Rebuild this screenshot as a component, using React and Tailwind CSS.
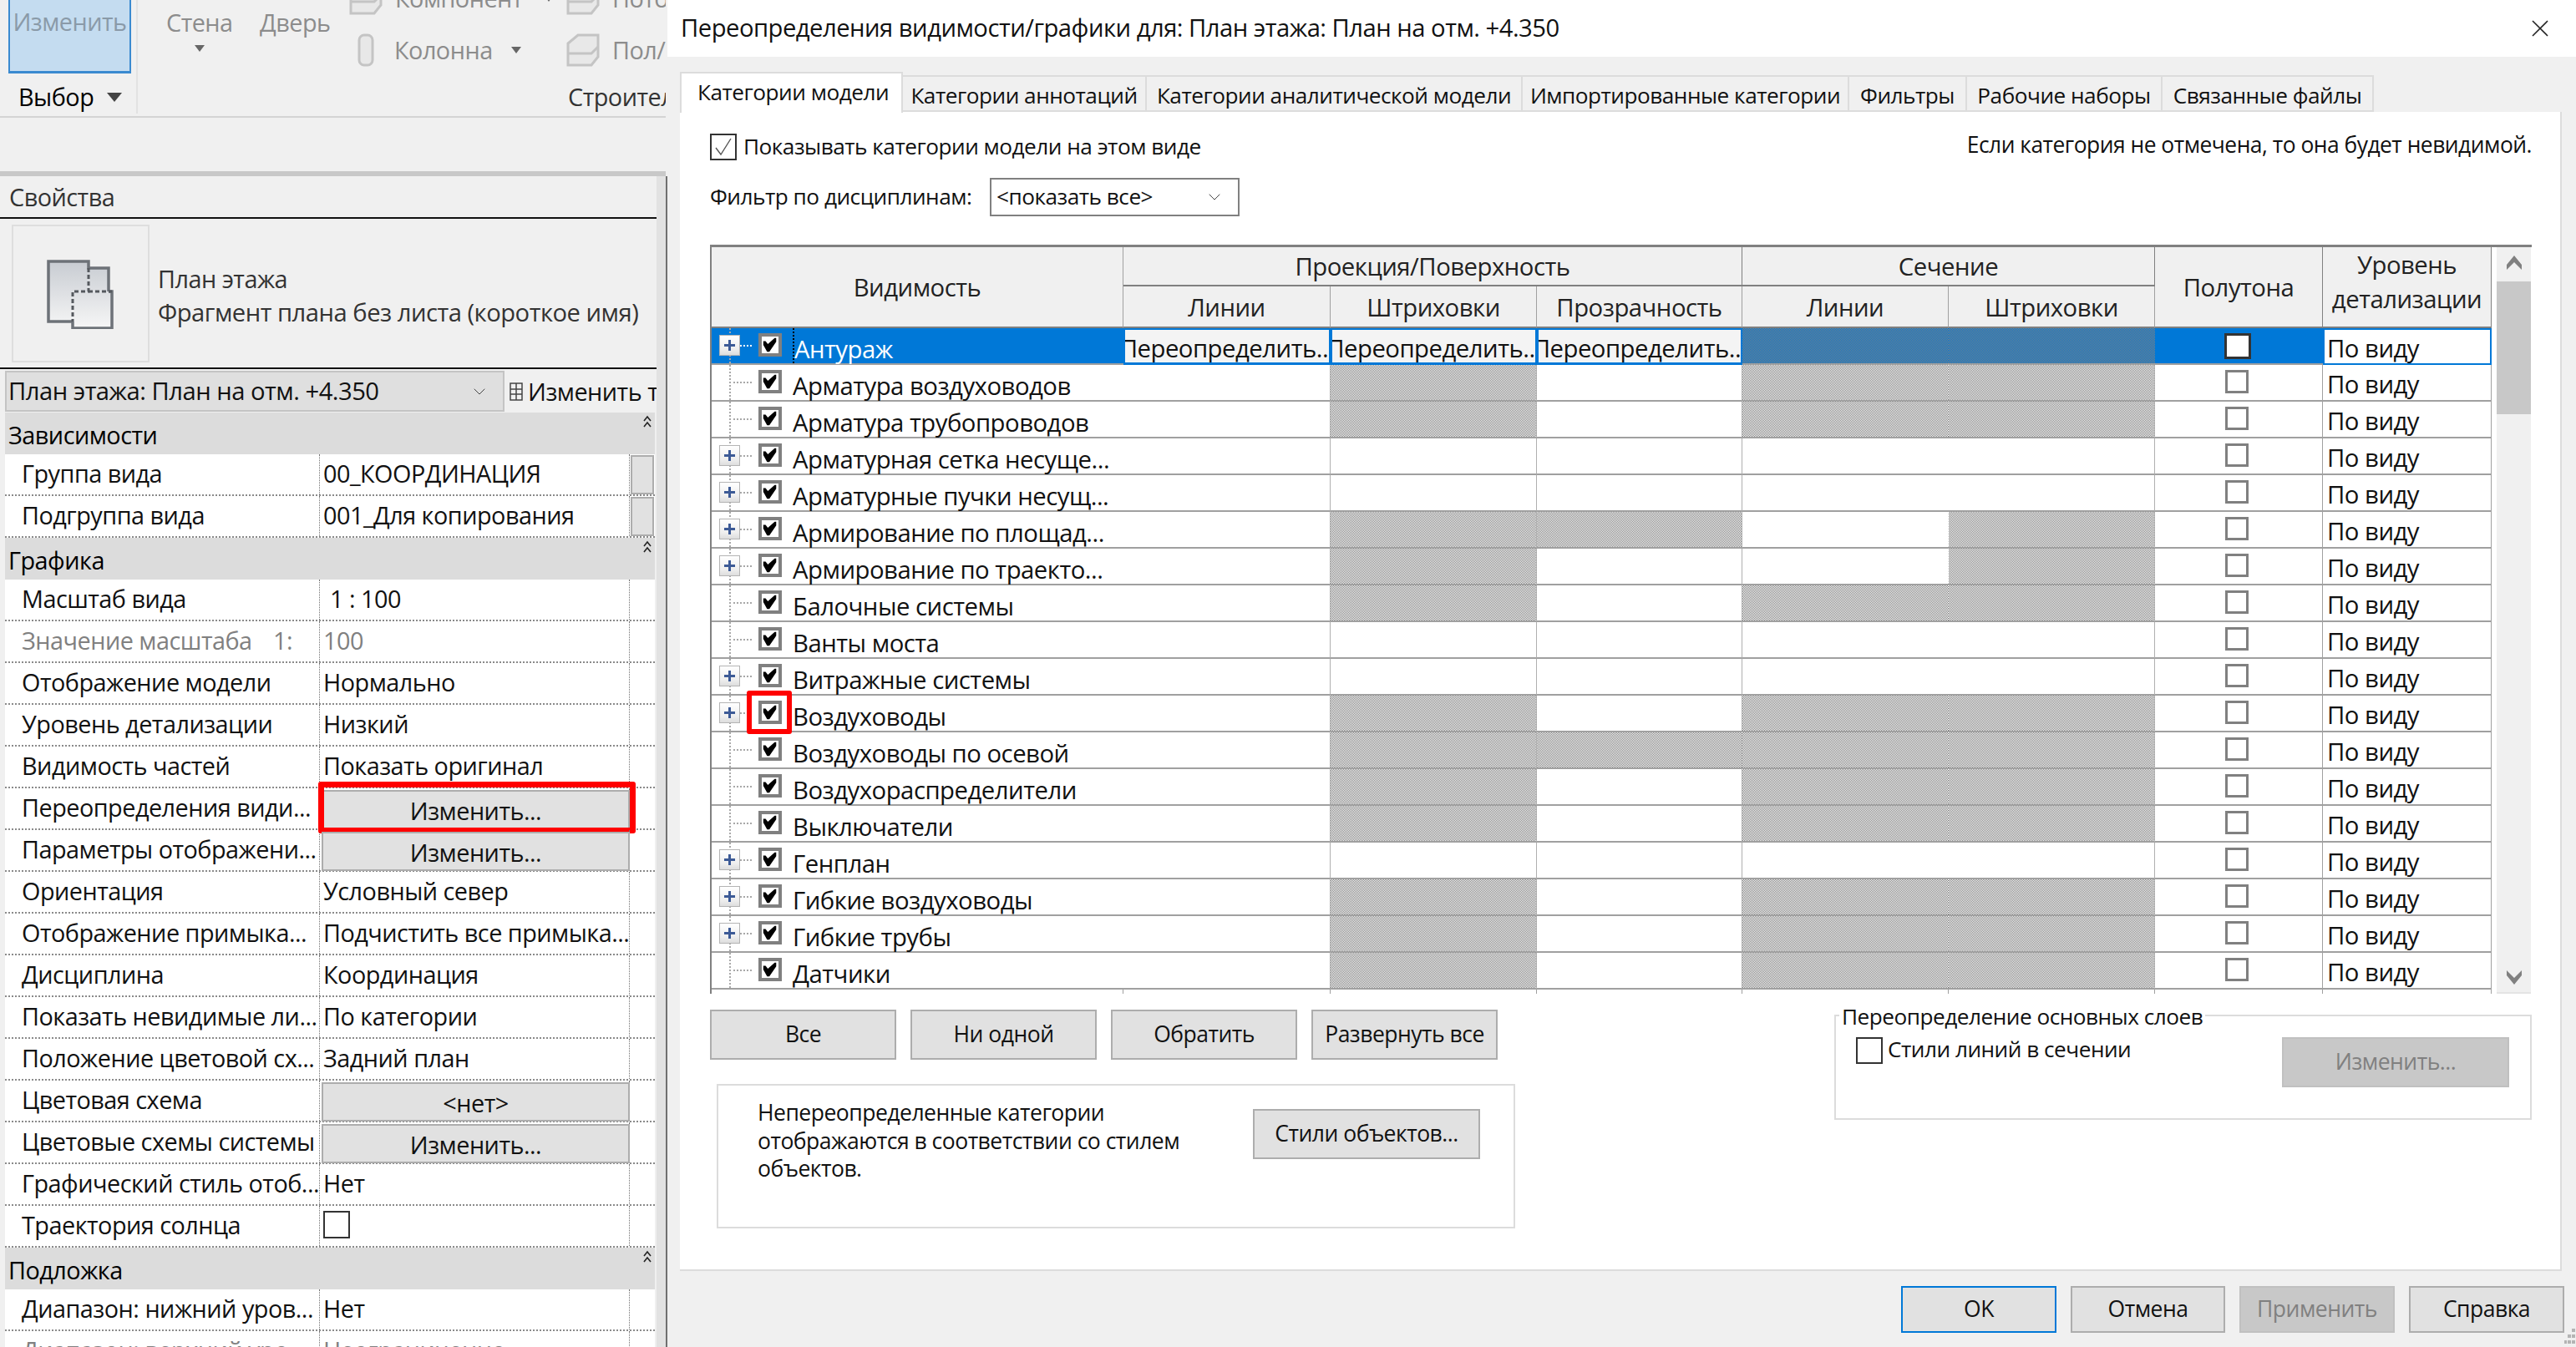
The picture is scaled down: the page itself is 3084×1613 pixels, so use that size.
import React from "react";
import { ChevronDown } from "lucide-react";

const hatch = "bg-[repeating-conic-gradient(#808080_0_25%,#ffffff_0_50%)] bg-[length:2px_2px]";
const hatchBlue = "bg-[repeating-conic-gradient(#808080_0_25%,#0078d7_0_50%)] bg-[length:2px_2px]";

// [name, has expander, gray columns: L H T SL SH]
const categories = [
  ["Арматура воздуховодов", false, "01011"],
  ["Арматура трубопроводов", false, "01011"],
  ["Арматурная сетка несуще...", true, "00000"],
  ["Арматурные пучки несущ...", true, "00000"],
  ["Армирование по площад...", true, "01101"],
  ["Армирование по траекто...", true, "01001"],
  ["Балочные системы", false, "01011"],
  ["Ванты моста", false, "00000"],
  ["Витражные системы", true, "00000"],
  ["Воздуховоды", true, "01011"],
  ["Воздуховоды по осевой", false, "01111"],
  ["Воздухораспределители", false, "01011"],
  ["Выключатели", false, "01011"],
  ["Генплан", true, "00000"],
  ["Гибкие воздуховоды", true, "01011"],
  ["Гибкие трубы", true, "01011"],
  ["Датчики", false, "01011"],
];

const props = [
  { head: "Зависимости" },
  { label: "Группа вида", value: "00_КООРДИНАЦИЯ", side: true },
  { label: "Подгруппа вида", value: "001_Для копирования", side: true },
  { head: "Графика" },
  { label: "Масштаб вида", value: "1 : 100", indent: true },
  { label: "Значение масштаба", value: "100", gray: true, suffix: "1:" },
  { label: "Отображение модели", value: "Нормально" },
  { label: "Уровень детализации", value: "Низкий" },
  { label: "Видимость частей", value: "Показать оригинал" },
  { label: "Переопределения види...", button: "Изменить...", marked: true },
  { label: "Параметры отображени...", button: "Изменить..." },
  { label: "Ориентация", value: "Условный север" },
  { label: "Отображение примыка...", value: "Подчистить все примыка..." },
  { label: "Дисциплина", value: "Координация" },
  { label: "Показать невидимые ли...", value: "По категории" },
  { label: "Положение цветовой сх...", value: "Задний план" },
  { label: "Цветовая схема", button: "<нет>" },
  { label: "Цветовые схемы системы", button: "Изменить..." },
  { label: "Графический стиль отоб...", value: "Нет" },
  { label: "Траектория солнца", check: true },
  { head: "Подложка" },
  { label: "Диапазон: нижний уров...", value: "Нет" },
  { label: "Диапазон: верхний уро...", value: "Неограниченно", gray: true },
];

const tabs = [
  ["Категории аннотаций", "w-[292px]"],
  ["Категории аналитической модели", "w-[450px]"],
  ["Импортированные категории", "w-[391px]"],
  ["Фильтры", "w-[141px]"],
  ["Рабочие наборы", "w-[234px]"],
  ["Связанные файлы", "w-[253px]"],
];

const DoubleUp = () => (
  <svg width="10" height="16" viewBox="0 0 10 16" className="absolute right-[4px] top-[3px]" fill="none" stroke="#222" strokeWidth="1.6">
    <path d="M1 7l4-5 4 5M1 14l4-5 4 5" />
  </svg>
);

const Tick = () => (
  <svg width="22" height="22" viewBox="0 0 22 22" className="block">
    <path d="M2 6h3l3 4 9-8h2v5L10 20H7L2 11z" fill="#000" />
  </svg>
);

const RowCheck = () => (
  <div className="w-[28px] h-[28px] border-[4px] border-[#808080] bg-white flex items-center justify-center">
    <Tick />
  </div>
);

const ThinCheck = ({ checked }) => (
  <div className="w-[32px] h-[32px] border-[2px] border-[#333333] bg-white flex items-center justify-center shrink-0">
    {checked && (
      <svg width="24" height="24" viewBox="0 0 24 24" fill="none" stroke="#555" strokeWidth="1.4">
        <path d="M3 13l6 8L21 2" />
      </svg>
    )}
  </div>
);

const PlanIcon = () => (
  <svg width="84" height="84" viewBox="0 0 84 84" fill="none">
    <defs>
      <linearGradient id="planFill" x1="0" y1="0" x2="0" y2="1">
        <stop offset="0" stopColor="#c8ccd2" />
        <stop offset="1" stopColor="#f6f6f6" />
      </linearGradient>
    </defs>
    <path d="M3 3h48v8h24v28h4v44H32v-8H3z" fill="url(#planFill)" />
    <path d="M32 75H3V3h48v8h24v28" stroke="#6d7278" strokeWidth="3.5" />
    <path d="M75 39h4v44H32v-8" stroke="#6d7278" strokeWidth="3.5" />
    <path d="M51 11v28H32v36" stroke="#55595e" strokeWidth="3" strokeDasharray="5 3" />
    <path d="M51 39h28" stroke="#55595e" strokeWidth="3" strokeDasharray="5 3" />
  </svg>
);

const RibbonIcon = ({ kind }) => {
  if (kind === "column") {
    return (
      <svg width="20" height="40" viewBox="0 0 20 40" fill="#e8e8e8" stroke="#c4c4c4" strokeWidth="3" className="shrink-0">
        <rect x="2" y="2" width="16" height="36" rx="6" />
      </svg>
    );
  }
  return (
    <svg width="40" height="40" viewBox="0 0 40 40" fill="#e8e8e8" stroke="#c4c4c4" strokeWidth="3" className="shrink-0">
      <path d="M2 12L14 2h24v26l-8 10H2z" />
      <path d="M2 24h28l8-8" fill="none" />
    </svg>
  );
};

const GrayText = ({ className, children }) => (
  <span className={"text-[#8c8c8c] whitespace-nowrap " + className}>{children}</span>
);

const Ribbon = () => (
  <div className="h-[141px] border-b-2 border-[#d4d4d4] flex overflow-hidden shrink-0">
    <div className="w-[165px] h-[136px] border-r-2 border-[#e2e2e2] pl-[10px] shrink-0">
      <div className="w-[147px] h-[88px] bg-[#c4dcf0] border-x-2 border-b-[3px] border-[#3a8ad0] text-[#8a9aa8] pt-[4px] text-center leading-[44px]">
        Изменить
      </div>
      <div className="flex items-center gap-[16px] pl-[12px] mt-[6px] h-[44px]">
        <span>Выбор</span>
        <span className="w-0 h-0 border-x-[9px] border-x-transparent border-t-[11px] border-t-[#444444]" />
      </div>
    </div>
    <div className="flex-1 overflow-hidden">
      <div className="h-[88px] flex pl-[34px]">
        <div className="w-[112px] flex flex-col shrink-0">
          <GrayText className="leading-[54px]">Стена</GrayText>
          <span className="ml-[34px] w-0 h-0 border-x-[6px] border-x-transparent border-t-[8px] border-t-[#666666]" />
        </div>
        <GrayText className="w-[107px] shrink-0 leading-[54px]">Дверь</GrayText>
        <div className="w-[260px] -mt-[22px] shrink-0">
          <div className="flex items-center h-[40px]">
            <RibbonIcon />
            <GrayText className="ml-[15px] leading-[40px]">Компонент</GrayText>
            <span className="ml-[26px] w-0 h-0 border-x-[5px] border-x-transparent border-t-[7px] border-t-[#666666]" />
          </div>
          <div className="flex items-center h-[40px] mt-[22px] pl-[10px]">
            <RibbonIcon kind="column" />
            <GrayText className="ml-[24px]">Колонна</GrayText>
            <span className="ml-[22px] w-0 h-0 border-x-[6px] border-x-transparent border-t-[8px] border-t-[#666666]" />
          </div>
        </div>
        <div className="-mt-[22px] shrink-0">
          <div className="flex items-center h-[40px]">
            <RibbonIcon />
            <GrayText className="ml-[15px]">Поток</GrayText>
          </div>
          <div className="flex items-center h-[40px] mt-[22px]">
            <RibbonIcon />
            <GrayText className="ml-[15px]">Пол/</GrayText>
          </div>
        </div>
      </div>
      <div className="ml-[515px] mt-[6px] leading-[44px] whitespace-nowrap text-[#333333]">Строитель</div>
    </div>
  </div>
);

const PropButton = ({ children, side }) => (
  <div
    className={
      "bg-[#e1e1e1] border-2 border-[#adadad] flex items-center justify-center h-[47px] " +
      (side ? "w-[28px] mx-auto mt-[1px]" : "w-[369px] mt-[2px] ml-[2px] pt-[2px]")
    }
  >
    {children}
  </div>
);

const PropRow = ({ row }) => {
  if (row.head) {
    return (
      <div className="h-[50px] bg-[#dcdcdc] flex items-end pl-[4px] pb-[4px] leading-[38px] relative">
        {row.head}
        <DoubleUp />
      </div>
    );
  }
  const color = row.gray ? "text-[#808080]" : "text-[#111111]";
  return (
    <div className="h-[50px] bg-white flex border-b-2 border-dotted border-[#8a8a8a]">
      <div className={"w-[377px] shrink-0 pl-[20px] pr-[2px] pb-[2px] border-r border-dotted border-[#707070] flex items-center justify-between whitespace-nowrap overflow-hidden " + color}>
        <span>{row.label}</span>
        {row.suffix && <span className="mr-[30px]">{row.suffix}</span>}
      </div>
      <div className={"w-[371px] shrink-0 border-r border-dotted border-[#707070] relative whitespace-nowrap " + color}>
        {row.button && <PropButton>{row.button}</PropButton>}
        {row.value && <div className={"leading-[46px] " + (row.indent ? "pl-[12px]" : "pl-[4px]")}>{row.value}</div>}
        {row.check && <div className="w-[32px] h-[33px] ml-[4px] mt-[6px] border-2 border-[#333333]" />}
        {row.marked && (
          <div className="absolute -left-[2px] -top-[8px] w-[380px] h-[62px] border-[7px] border-[#ff0000] rounded-[3px]" />
        )}
      </div>
      <div className="flex-1">{row.side && <PropButton side />}</div>
    </div>
  );
};

const PropertiesPanel = () => (
  <aside className="w-[799px] h-[1613px] shrink-0 bg-[#f0f0f0] flex overflow-hidden text-[28.8px]">
    <div className="w-[786px] shrink-0 flex flex-col">
      <div className="w-[797px] shrink-0">
        <Ribbon />
      </div>
      <div className="w-[797px] h-[64px] shrink-0" />
      <div className="w-[797px] h-[6px] shrink-0 bg-[#c8c8c8]" />
      <div className="w-[797px] h-[51px] shrink-0 pl-[11px] leading-[50px] text-[#333333] border-b-2 border-[#111111]">Свойства</div>
      <div className="h-[180px] shrink-0 flex pl-[14px] pt-[7px] w-[797px] border-b-2 border-[#111111]">
        <div className="w-[165px] h-[165px] border-2 border-[#dedede] flex items-center justify-center shrink-0">
          <PlanIcon />
        </div>
        <div className="pl-[10px] pt-[45px] text-[#333333] leading-[40px] whitespace-nowrap">
          <div>План этажа</div>
          <div className="text-[29.2px]">Фрагмент плана без листа (короткое имя)</div>
        </div>
      </div>
      <div className="flex h-[52px] shrink-0 w-[797px] pl-[6px] pt-[2px] whitespace-nowrap">
        <div className="w-[598px] h-[49px] shrink-0 bg-[#dfdfdf] border-2 border-[#c4c4c4] flex items-center justify-between pl-[2px] pr-[16px] text-[#111111]">
          <span className="text-[29.2px]">План этажа: План на отм. +4.350</span>
          <ChevronDown size={24} strokeWidth={1} color="#444" />
        </div>
        <div className="flex items-center pl-[6px] text-[#111111] overflow-hidden">
          <svg width="16" height="22" viewBox="0 0 16 22" fill="none" stroke="#444" strokeWidth="1.5" className="mr-[6px] shrink-0">
            <rect x="1" y="1" width="14" height="20" />
            <path d="M1 8h14M1 14h14M8 1v20" />
          </svg>
          Изменить типы
        </div>
      </div>
      <div className="ml-[6px] w-[778px] shrink-0">
        {props.map((row, i) => (
          <PropRow key={i} row={row} />
        ))}
      </div>
    </div>
    <div className="flex-1 flex mt-[211px]">
      <div className="w-[11px] bg-[#e2e2e2]" />
      <div className="w-[2px] bg-[#707070]" />
    </div>
  </aside>
);

const Expander = () => (
  <div className="w-[25px] h-[25px] border border-[#b4b4b4] bg-[linear-gradient(#ffffff,#eeeeee_70%,#dddddd)] flex items-center justify-center relative z-10">
    <svg width="13" height="13" viewBox="0 0 13 13" fill="#3c5a96">
      <path d="M5 0h3v5h5v3H8v5H5V8H0V5h5z" />
    </svg>
  </div>
);

const CategoryName = ({ name, expander, marked, selected }) => (
  <div className={"relative h-full flex items-start " + (selected ? "text-white" : "text-[#111111]")}>
    <div className="absolute left-[21px] top-0 bottom-0 border-l-2 border-dotted border-[#a8a8a8]" />
    <div className={"absolute left-[21px] top-[20px] w-[27px] border-t-2 border-dotted " + (selected ? "border-white" : "border-[#a8a8a8]")} />
    <div className="w-[34px] pl-[9px] pt-[8px] shrink-0">{expander && <Expander />}</div>
    <div className="ml-[22px] mt-[6px] shrink-0 relative z-10">
      <RowCheck />
    </div>
    <div className={"ml-[13px] pt-[5px] leading-[40px] whitespace-nowrap h-full flex-1 " + (selected ? "border-l-2 border-dotted border-black" : "")}>{name}</div>
    {marked && (
      <div className="absolute left-[42px] -top-[6px] w-[54px] h-[52px] border-[6px] border-[#ff0000] rounded-[3px] z-20" />
    )}
  </div>
);

const GrayCell = ({ gray, right }) => (
  <div className={"border-b-2 border-[#a0a0a0] " + (right ? "border-r border-r-[#b0b0b0] " : "") + (gray ? hatch : "bg-white")} />
);

const OverrideCell = () => (
  <div className="border-2 border-[#0078d7] border-b-[3px] bg-[#f4f4f4] overflow-hidden flex justify-center whitespace-nowrap leading-[40px] pt-[2px]">
    Переопределить...
  </div>
);

const VisibilityTable = () => (
  <div className="flex h-[897px] border-t-[3px] border-[#808080] bg-white text-[29.3px]">
    <div className="w-[2133px] border-l-2 border-[#808080] shrink-0 overflow-hidden">
      <div className="grid grid-cols-[493px_248px_247px_246px_247px_247px_201px_202px] grid-rows-[47px_50px] bg-[#f0f0f0] text-[#222222] text-center">
        <div className="row-span-2 pt-[2px] flex items-center justify-center border-r border-[#a0a0a0] border-b-2 border-b-[#808080]">Видимость</div>
        <div className="col-span-3 pt-[2px] flex items-center justify-center border-r border-[#808080] border-b-2 border-b-[#808080]">Проекция/Поверхность</div>
        <div className="col-span-2 pt-[2px] flex items-center justify-center border-r border-[#808080] border-b-2 border-b-[#808080]">Сечение</div>
        <div className="row-span-2 pt-[2px] flex items-center justify-center border-r border-[#808080] border-b-2 border-b-[#808080]">Полутона</div>
        <div className="row-span-2 flex flex-col items-center justify-center pb-[12px] border-r border-[#808080] border-b-2 border-b-[#808080] leading-[41px]">
          <span>Уровень</span>
          <span>детализации</span>
        </div>
        {["Линии", "Штриховки", "Прозрачность", "Линии", "Штриховки"].map((h, i) => (
          <div key={i} className="pt-[3px] flex items-center justify-center border-r border-[#a0a0a0] border-b-2 border-b-[#808080]">
            {h}
          </div>
        ))}
      </div>
      <div className="grid grid-cols-[493px_248px_247px_246px_247px_247px_201px_202px] auto-rows-[44px]">
        <div className="bg-[#0078d7] border-b-2 border-[#a0a0a0]">
          <CategoryName name="Антураж" expander selected />
        </div>
        <OverrideCell />
        <OverrideCell />
        <OverrideCell />
        <div className={hatchBlue + " border-b-2 border-[#a0a0a0]"} />
        <div className={hatchBlue + " border-b-2 border-[#a0a0a0]"} />
        <div className="bg-[#0078d7] border-b-2 border-[#a0a0a0] flex justify-center items-start pt-[6px] pr-[4px]">
          <div className="w-[32px] h-[31px] bg-white border-[3px] border-[#333333]" />
        </div>
        <div className="bg-white border-2 border-[#0078d7] leading-[40px] pl-[3px] pt-[2px]">По виду</div>
        {categories.map(([name, expander, gray]) => (
          <React.Fragment key={name}>
            <div className="border-b-2 border-[#a0a0a0] bg-white">
              <CategoryName name={name} expander={expander} marked={name === "Воздуховоды"} />
            </div>
            {gray.split("").map((g, k) => (
              <GrayCell key={k} gray={g === "1"} right={k !== 3} />
            ))}
            <div className="border-b-2 border-r border-[#a0a0a0] bg-white flex justify-center items-start pt-[6px] pr-[4px]">
              <div className="w-[28px] h-[28px] border-[3px] border-[#808080]" />
            </div>
            <div className="border-b-2 border-r border-[#a0a0a0] bg-white leading-[40px] pl-[5px] pt-[3px] text-[#111111]">По виду</div>
          </React.Fragment>
        ))}
        {/* the next, cut-off row only shows its column lines */}
        {[0, 1, 2, 3, 4, 5, 6, 7].map((k) => (
          <div key={k} className="border-r border-[#a0a0a0] bg-white" />
        ))}
      </div>
    </div>
    <div className="w-[6px] shrink-0 bg-white" />
    <div className="w-[41px] shrink-0 bg-[#f0f0f0] flex flex-col items-center border-b-2 border-[#e4e4e4]">
      <svg width="20" height="17" viewBox="0 0 20 17" fill="#808080" className="mt-[10px] shrink-0">
        <path d="M10 0l9 11v6l-9-9-9 9v-6z" />
      </svg>
      <div className="w-full h-[159px] bg-[#c8c8c8] mt-[14px] shrink-0" />
      <div className="flex-1" />
      <svg width="20" height="17" viewBox="0 0 20 17" fill="#808080" className="mb-[9px] shrink-0">
        <path d="M10 17l9-11V0l-9 9-9-9v6z" />
      </svg>
    </div>
  </div>
);

const DialogButton = ({ children, className = "" }) => (
  <button className={"bg-[#e1e1e1] border-2 text-[#111111] text-[26.5px] " + className}>{children}</button>
);

const OverridesDialog = () => (
  <main className="flex-1 h-[1613px] flex flex-col bg-[#f0f0f0] text-[#111111] text-[26.2px]">
    <header className="h-[68px] bg-white shrink-0 flex items-center justify-between pl-[16px] pr-[34px] text-[29.2px]">
      <span>Переопределения видимости/графики для: План этажа: План на отм. +4.350</span>
      <svg width="20" height="20" viewBox="0 0 20 20" stroke="#222" strokeWidth="1.6" fill="none">
        <path d="M1 1l18 18M19 1L1 19" />
      </svg>
    </header>
    <div className="pl-[15px] pr-[18px] pt-[17px] flex-1 flex flex-col">
      <div className="flex items-end h-[49px] shrink-0">
        <div className="w-[267px] h-[49px] bg-white border-x-2 border-t-2 border-[#dcdcdc] border-b-0 pl-[19px] leading-[44px] relative top-[1px]">Категории модели</div>
        {tabs.map(([t, w]) => (
          <div key={t} className={w + " h-[44px] border-t-2 border-r-2 border-b-2 border-[#dcdcdc] whitespace-nowrap text-center leading-[44px]"}>
            {t}
          </div>
        ))}
      </div>
      <section className="h-[1388px] shrink-0 bg-white border-r-2 border-b-2 border-[#dcdcdc] pl-[36px] pr-[34px]">
        <div className="flex justify-between pt-[26px] h-[58px]">
          <div className="flex items-center gap-[8px] h-[32px]">
            <ThinCheck checked />
            <span>Показывать категории модели на этом виде</span>
          </div>
          <span className="leading-[26px] text-[26.4px]">Если категория не отмечена, то она будет невидимой.</span>
        </div>
        <div className="flex items-center h-[46px] mt-[21px]">
          <span className="w-[335px]">Фильтр по дисциплинам:</span>
          <div className="w-[299px] h-[46px] border-2 border-[#808080] flex items-center justify-between pl-[6px] pr-[16px]">
            <span>&lt;показать все&gt;</span>
            <ChevronDown size={24} strokeWidth={1} color="#444" />
          </div>
        </div>
        <div className="mt-[34px]">
          <VisibilityTable />
        </div>
        <div className="flex mt-[19px]">
          <div className="w-[964px] shrink-0">
            <div className="flex gap-[17px] h-[60px]">
              {["Все", "Ни одной", "Обратить", "Развернуть все"].map((b) => (
                <DialogButton key={b} className="w-[223px] border-[#adadad]">{b}</DialogButton>
              ))}
            </div>
            <div className="ml-[8px] mt-[29px] h-[173px] border-2 border-[#dcdcdc] flex">
              <div className="w-[640px] pl-[47px] pt-[16px] leading-[33.5px] text-[26.5px]">
                Непереопределенные категории
                <br />
                отображаются в соответствии со стилем
                <br />
                объектов.
              </div>
              <DialogButton className="w-[272px] h-[60px] mt-[28px] border-[#adadad]">Стили объектов...</DialogButton>
            </div>
          </div>
          <div className="ml-[382px] mt-[6px] w-[835px] h-[126px] border-2 border-[#dcdcdc] relative flex justify-between pl-[24px] pr-[25px] pt-[25px]">
            <span className="absolute left-[4px] -top-[18px] bg-white px-[3px] leading-[36px] whitespace-nowrap">Переопределение основных слоев</span>
            <div className="flex gap-[6px] items-start">
              <ThinCheck />
              <span className="leading-[28px]">Стили линий в сечении</span>
            </div>
            <button className="w-[272px] h-[60px] bg-[#c8c8c8] border-2 border-[#c0c0c0] text-[#808080] text-[26.5px]">Изменить...</button>
          </div>
        </div>
      </section>
      <footer className="flex justify-end gap-[17px] pt-[18px] -mr-[3px] relative">
        <DialogButton className="w-[186px] h-[56px] border-[#0078d7]">OK</DialogButton>
        <DialogButton className="w-[185px] h-[56px] border-[#adadad]">Отмена</DialogButton>
        <button className="w-[186px] h-[56px] bg-[#c8c8c8] border-2 border-[#c0c0c0] text-[#808080] text-[26.5px]">Применить</button>
        <DialogButton className="w-[186px] h-[56px] border-[#adadad]">Справка</DialogButton>
      </footer>
    </div>
    <svg width="14" height="22" viewBox="0 0 14 22" fill="#b4b4b4" className="absolute right-0 bottom-0">
      <path d="M9 0h4v4H9zM9 7h4v4H9zM4 7h4v4H4zM9 14h4v4H9zM4 14h4v4H4zM-1 14h4v4H-1z" />
    </svg>
  </main>
);

export default function App() {
  return (
    <div className="relative w-[3084px] h-[1613px] flex overflow-hidden bg-white font-['Open_Sans',sans-serif] tracking-[-0.5px]">
      <PropertiesPanel />
      <OverridesDialog />
    </div>
  );
}
